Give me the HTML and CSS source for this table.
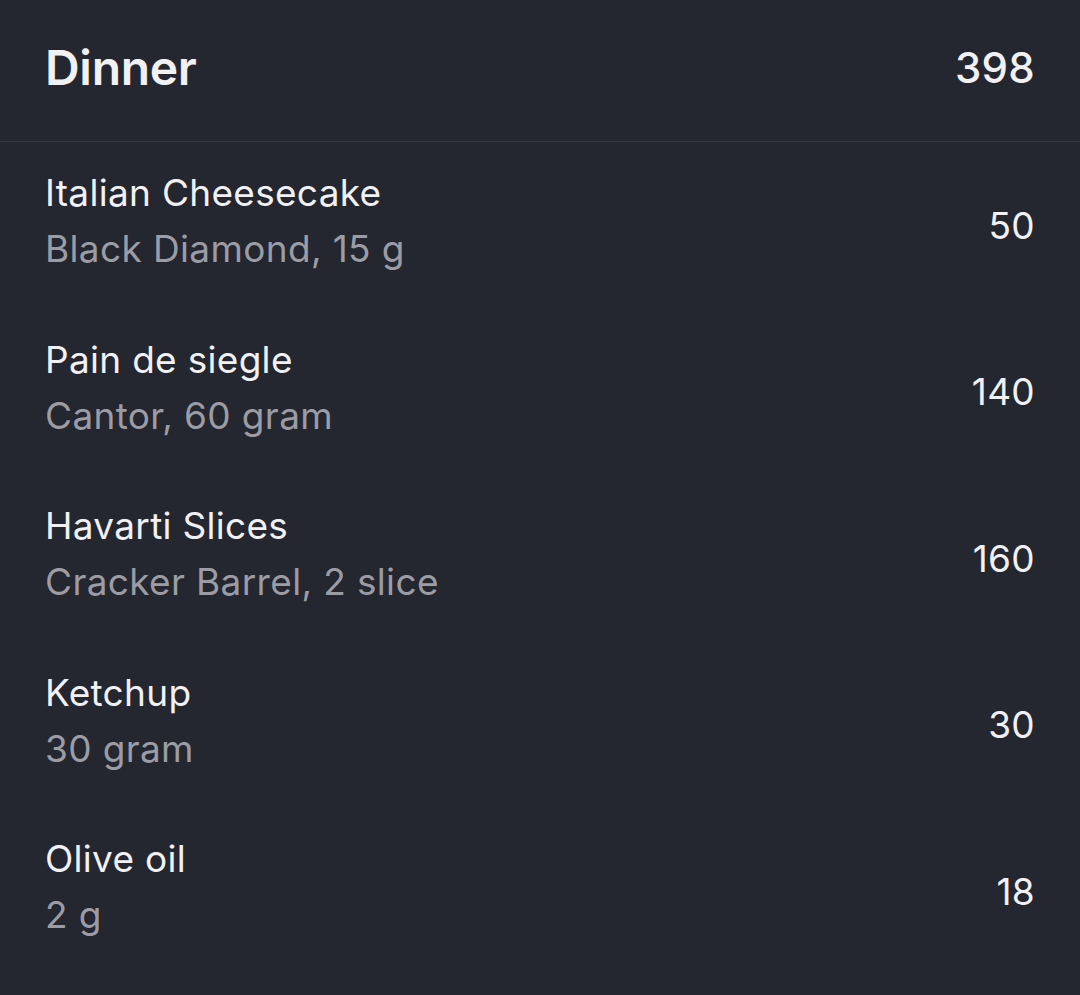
FILE: index.html
```html
<!DOCTYPE html>
<html>
<head>
<meta charset="utf-8">
<link rel="stylesheet" href="styles.css">
</head>
<body>
<div class="card">
  <div class="header">
    <div class="meal">Dinner</div>
    <div class="total">398</div>
  </div>
  <div class="list">
    <div class="row">
      <div class="info"><div class="name">Italian Cheesecake</div><div class="detail">Black Diamond, 15 g</div></div>
      <div class="kcal">50</div>
    </div>
    <div class="row">
      <div class="info"><div class="name">Pain de siegle</div><div class="detail">Cantor, 60 gram</div></div>
      <div class="kcal">140</div>
    </div>
    <div class="row">
      <div class="info"><div class="name">Havarti Slices</div><div class="detail">Cracker Barrel, 2 slice</div></div>
      <div class="kcal">160</div>
    </div>
    <div class="row">
      <div class="info"><div class="name">Ketchup</div><div class="detail">30 gram</div></div>
      <div class="kcal">30</div>
    </div>
    <div class="row">
      <div class="info"><div class="name">Olive oil</div><div class="detail">2 g</div></div>
      <div class="kcal">18</div>
    </div>
  </div>
</div>
</body>
</html>
```
FILE: styles.css
```css
html, body {
  margin: 0;
  padding: 0;
  background: #242630;
}
body {
  font-family: Inter, "Noto Sans", sans-serif;
  color: #f1f1f3;
  height: 995px;
  overflow: hidden;
}
.header {
  height: 142px;
  box-sizing: border-box;
  padding: 0 45px 6px 45px;
  display: flex;
  align-items: center;
  justify-content: space-between;
  border-bottom: 1px solid #363843;
}
.meal {
  font-size: 48px;
  font-weight: 600;
  letter-spacing: -0.3px;
}
.total {
  font-size: 42px;
  font-weight: 500;
  letter-spacing: 0.3px;
}
.row {
  height: 166.5px;
  box-sizing: border-box;
  padding: 0 45px 0 45px;
  display: flex;
  align-items: center;
  justify-content: space-between;
}
.info {
  padding-bottom: 8px;
}
.name {
  font-size: 37px;
  line-height: 56px;
  letter-spacing: 0.3px;
  color: #f1f1f3;
}
.detail {
  font-size: 37px;
  line-height: 56px;
  letter-spacing: 0.35px;
  color: #9b9ca4;
}
.kcal {
  font-size: 37px;
  letter-spacing: 0.3px;
  color: #f1f1f3;
}
```
